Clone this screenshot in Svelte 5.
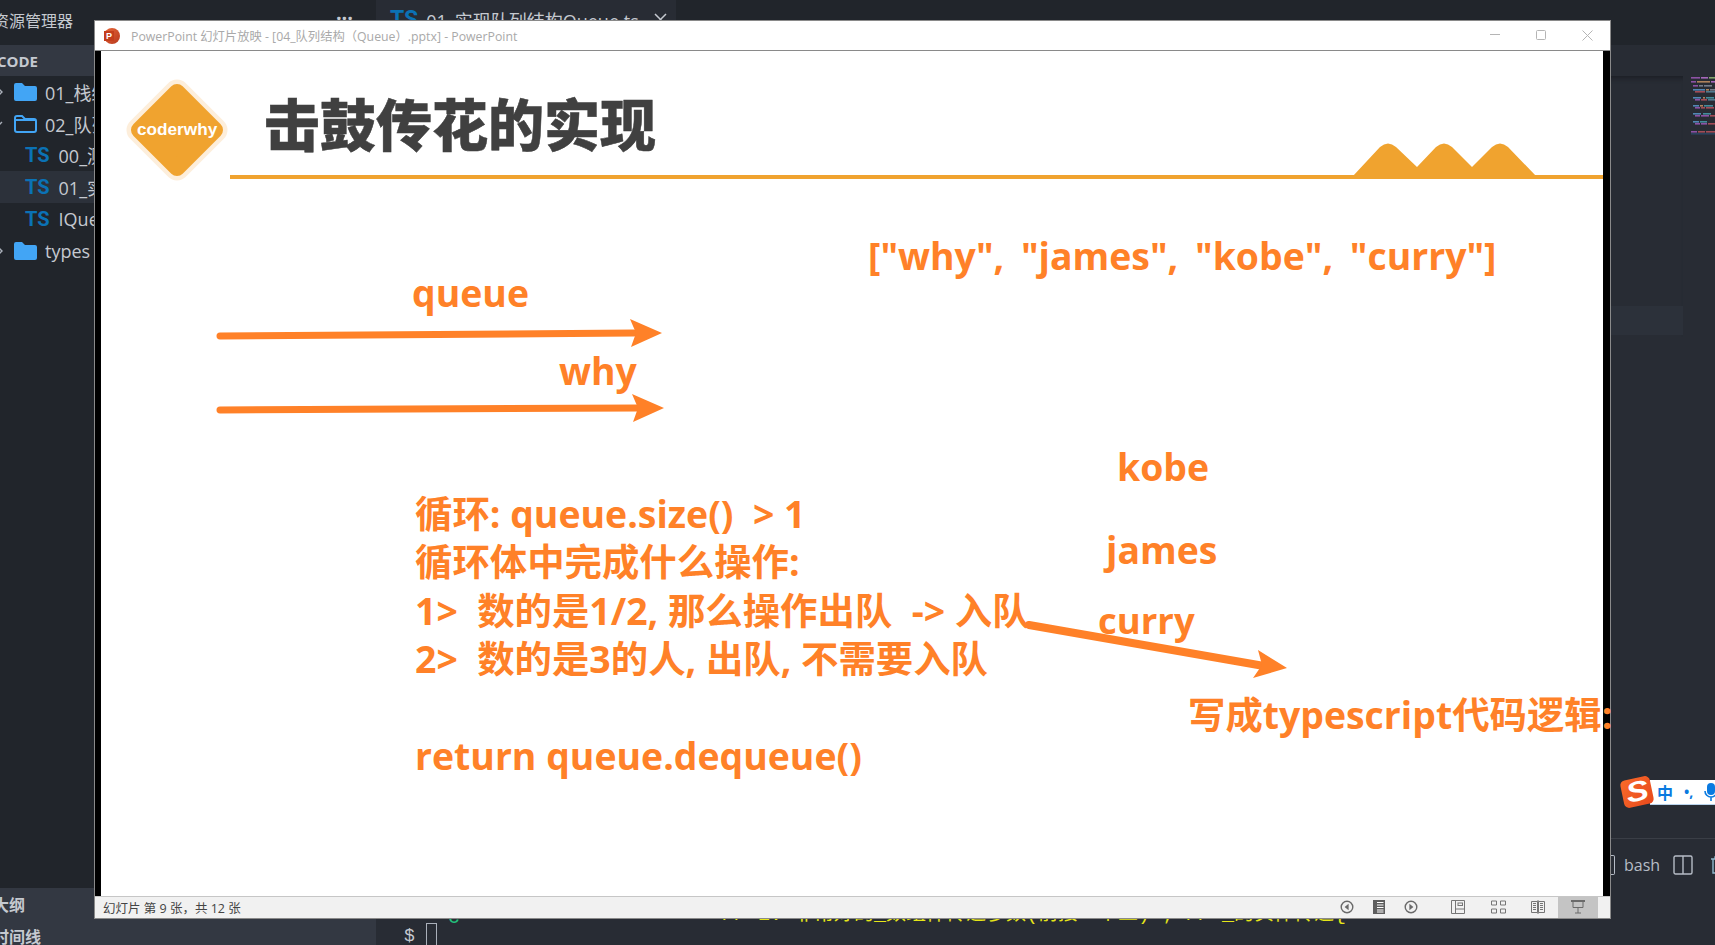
<script>
  const tree = [
    { kind: 'folder', label: '01_栈结构', chev: 'r' },
    { kind: 'open', label: '02_队列结构', chev: 'd' },
    { kind: 'ts', label: '00_测试.ts' },
    { kind: 'ts', label: '01_实现队列结构Queue.ts', active: true },
    { kind: 'ts', label: 'IQueue.ts' },
    { kind: 'folder', label: 'types', chev: 'r' }
  ];
  const mini = [
    [77, 1691, 9, '#a65cc0'], [77, 1701, 7, '#c678dd'], [77, 1709, 6, '#98c379'],
    [81, 1691, 5, '#a65cc0'], [81, 1697, 13, '#d19a66'], [81, 1711, 4, '#c678dd'],
    [85, 1693, 5, '#a65cc0'], [85, 1699, 4, '#8a92a0'], [85, 1704, 8, '#8a92a0'],
    [89, 1693, 12, '#5c9fd6'], [89, 1706, 3, '#d19a66'], [89, 1710, 5, '#8a92a0'],
    [91, 1695, 10, '#c25560'], [91, 1706, 9, '#5c8fa6'],
    [97, 1693, 8, '#5c9fd6'], [97, 1703, 2, '#d19a66'], [97, 1706, 8, '#4aa5b5'],
    [99, 1695, 5, '#a65cc0'], [99, 1701, 6, '#c25560'], [99, 1708, 7, '#5c8fa6'],
    [105, 1693, 6, '#5c9fd6'], [105, 1700, 3, '#d19a66'], [105, 1704, 9, '#4aa5b5'],
    [107, 1695, 5, '#a65cc0'], [107, 1701, 4, '#c25560'], [107, 1706, 8, '#c25560'],
    [113, 1693, 8, '#5c9fd6'], [113, 1703, 8, '#4aa5b5'],
    [115, 1695, 5, '#a65cc0'], [115, 1701, 8, '#a65cc0'], [115, 1710, 5, '#c25560'],
    [121, 1693, 6, '#5c9fd6'], [121, 1700, 7, '#4aa5b5'],
    [123, 1695, 5, '#a65cc0'], [123, 1701, 6, '#a65cc0'], [123, 1708, 7, '#c25560'],
    [131, 1691, 6, '#a65cc0'], [131, 1698, 7, '#c25560'], [131, 1706, 9, '#c25560'],
    [133, 1691, 24, '#2c4a68']
  ];
</script>

<div class="desk">
  <aside class="side">
    <div class="side-title"><span>资源管理器</span><span class="dots">···</span></div>
    <div class="side-head">CODE</div>
    <ul class="tree">
      {#each tree as row}
        <li class="row" class:active={row.active} class:leaf={row.kind === 'ts'}>
          {#if row.chev === 'r'}
            <svg class="chev" width="8" height="10" viewBox="0 0 8 10"><path d="M1 1l4 4-4 4" fill="none" stroke="#aab0ba" stroke-width="1.4"/></svg>
          {:else if row.chev === 'd'}
            <svg class="chev" width="8" height="10" viewBox="0 0 8 10"><path d="M-3 3l4 4 4-4" fill="none" stroke="#aab0ba" stroke-width="1.4"/></svg>
          {/if}
          {#if row.kind === 'ts'}
            <span class="ts">TS</span>
          {:else if row.kind === 'folder'}
            <svg class="folder" width="23" height="18" viewBox="0 0 23 18"><path d="M2 0h6l3 3h10a2 2 0 0 1 2 2v11a2 2 0 0 1-2 2H2a2 2 0 0 1-2-2V2a2 2 0 0 1 2-2z" fill="#42a5f5"/></svg>
          {:else}
            <svg class="folder" width="23" height="18" viewBox="0 0 23 18"><path d="M3 1h5l3 3h9a2 2 0 0 1 2 2v9a2 2 0 0 1-2 2H3a2 2 0 0 1-2-2V3a2 2 0 0 1 2-2z" fill="none" stroke="#42a5f5" stroke-width="2"/><path d="M1 5h21" stroke="#42a5f5" stroke-width="2"/></svg>
          {/if}
          <span class="label">{row.label}</span>
        </li>
      {/each}
    </ul>
    <div class="side-foot">
      <div class="foot-row">大纲</div>
      <div class="foot-row">时间线</div>
    </div>
  </aside>

  <main class="main">
    <div class="tabs">
      <div class="tab"><span class="ts">TS</span><span class="tab-name">01_实现队列结构Queue.ts</span><svg width="13" height="13" viewBox="0 0 13 13"><path d="M1 1l11 11M12 1L1 12" stroke="#c5c9d0" stroke-width="1.5"/></svg></div>
    </div>
    <div class="editor">
      <div class="crumbs"></div>
      <div class="code-col">
        <div class="current"></div>
      </div>
      <svg class="minimap" width="32" height="70" viewBox="1683 70 32 70">
        {#each mini as m}<rect x={m[1]} y={m[0]} width={m[2]} height="1.6" fill={m[3]} opacity=".8"/>{/each}
      </svg>
    </div>
    <div class="panel">
      <div class="panel-bar">
        <span class="bracket"></span>
        <span class="bash">bash</span>
        <svg class="split" width="20" height="20" viewBox="0 0 20 20"><rect x="1" y="1" width="18" height="18" rx="1.5" fill="none" stroke="#b6bcc6" stroke-width="1.4"/><path d="M10 1v18" stroke="#b6bcc6" stroke-width="1.4"/></svg>
        <svg class="trash" width="14" height="18" viewBox="0 0 14 18"><path d="M0 3h14M4 3V1h6v2M2 3v14h10V3" fill="none" stroke="#8fb7cc" stroke-width="1.4"/></svg>
      </div>
      <div class="term">
        <div class="term-green">c</div>
        <div class="term-yellow">// 1. 非常好的_数组件传递参数(前接一个二) ; // _的实体传递{'{'}</div>
        <div class="prompt"><span>$</span><span class="cursor"></span></div>
      </div>
    </div>
  </main>

  <section class="window">
    <header class="titlebar">
      <span class="ppt"><span class="ppt-p">P</span></span>
      <span class="win-title">PowerPoint 幻灯片放映 - [04_队列结构（Queue）.pptx] - PowerPoint</span>
      <div class="controls">
        <svg width="10" height="10" viewBox="0 0 10 10"><path d="M0 4.500h10" stroke="#b5b5b5" stroke-width="1"/></svg>
        <svg width="10" height="10" viewBox="0 0 10 10"><rect x=".5" y=".5" width="9" height="9" rx="1" fill="none" stroke="#b5b5b5"/></svg>
        <svg width="11" height="11" viewBox="0 0 11 11"><path d="M.5.5l10 10M10.500.5l-10 10" stroke="#b5b5b5"/></svg>
      </div>
    </header>

    <div class="stage">
      <div class="slide">
        <svg class="art" width="1502" height="845" viewBox="101 51 1502 845">
          <polygon points="177,92 215,130 177,168 139,130" fill="#fdeedb" stroke="#fdeedb" stroke-width="25" stroke-linejoin="round"/>
          <polygon points="177,92 215,130 177,168 139,130" fill="#f0a32f" stroke="#f0a32f" stroke-width="16" stroke-linejoin="round"/>
          <rect x="230" y="175" width="1373" height="4" fill="#f0a32f"/>
          <path d="M1353 176L1380 147Q1388 140 1396 147L1417 167L1436 147Q1444 140 1452 147L1472 167L1492 147Q1500 140 1508 147L1536 176V179H1353Z" fill="#f0a32f"/>

          <path d="M220 336L634 333" stroke="#ff8128" stroke-width="7" stroke-linecap="round"/>
          <polygon points="662,333 630,319 636,333 631,347" fill="#ff8128"/>
          <path d="M220 410L638 408" stroke="#ff8128" stroke-width="7" stroke-linecap="round"/>
          <polygon points="664,408 632,394 638,408 633,422" fill="#ff8128"/>
          <path d="M1029 625L1264 666" stroke="#ff8128" stroke-width="8" stroke-linecap="round"/>
          <polygon points="1287,668 1258,650 1262,665 1253,678" fill="#ff8128"/>
        </svg>

        <div class="logo-text">coderwhy</div>
        <h1 class="heading">击鼓传花的实现</h1>

        <div class="t t-list">["why", "james", "kobe", "curry"]</div>
        <div class="t t-queue">queue</div>
        <div class="t t-why">why</div>
        <div class="t t-kobe">kobe</div>
        <div class="t t-james">james</div>
        <div class="t t-curry">curry</div>
        <div class="t t-code">写成typescript代码逻辑:</div>
        <div class="t t-body">
          <div>循环: queue.size()&nbsp; &gt; 1</div>
          <div>循环体中完成什么操作:</div>
          <div>1&gt;&nbsp; 数的是1/2, 那么操作出队&nbsp; -&gt;&nbsp;入队</div>
          <div>2&gt;&nbsp; 数的是3的人, 出队, 不需要入队</div>
          <div>&nbsp;</div>
          <div>return queue.dequeue()</div>
        </div>
      </div>
    </div>

    <footer class="status">
      <span class="status-text">幻灯片 第 9 张，共 12 张</span>
      <div class="status-icons">
        <svg class="ic-prev" width="14" height="14" viewBox="0 0 14 14"><circle cx="7" cy="7" r="5.8" fill="none" stroke="#6a6a6a" stroke-width="1.4"/><path d="M8.6 3.8v6.4L4.6 7z" fill="#6a6a6a"/></svg>
        <svg class="ic-notes" width="12" height="14" viewBox="0 0 12 14"><rect width="12" height="14" fill="#5e5e5e"/><path d="M4 2.500h6.500M4 5h6.500M4 7.500h6.500M4 10h6.500M4 12h6.500" stroke="#fff" stroke-width="1"/></svg>
        <svg class="ic-next" width="14" height="14" viewBox="0 0 14 14"><circle cx="7" cy="7" r="5.8" fill="none" stroke="#6a6a6a" stroke-width="1.4"/><path d="M5.4 3.8v6.4L9.4 7z" fill="#6a6a6a"/></svg>
        <svg class="ic-normal" width="14" height="14" viewBox="0 0 14 14"><path d="M.5.5h13v13H.5zM4.500.5v13M4.500 9h9" fill="none" stroke="#767676"/><rect x="7" y="3" width="4.500" height="2.500" fill="none" stroke="#767676"/></svg>
        <svg class="ic-grid" width="15" height="14" viewBox="0 0 15 14"><path d="M.5 1h5v4h-5zM9.500 1h5v4h-5zM.5 9h5v4h-5zM9.500 9h5v4h-5z" fill="none" stroke="#767676"/></svg>
        <svg class="ic-read" width="14" height="14" viewBox="0 0 14 14"><path d="M.5 1.500h6v11h-6zM7.500 1.500h6v11h-6zM2 3.500h3M2 5.500h3M2 7.500h3M2 9.500h3M9 3.500h3M9 5.500h3M9 7.500h3M9 9.500h3M7 0v14" fill="none" stroke="#767676"/></svg>
        <div class="ic-show">
          <svg width="14" height="14" viewBox="0 0 14 14"><path d="M0 1h14" stroke="#6a6a6a" stroke-width="2"/><path d="M2 2v5.500h10V2M7 7.500V13M4 13h6" fill="none" stroke="#6a6a6a"/></svg>
        </div>
      </div>
    </footer>
  </section>

  <div class="ime">
    <span class="sogou"><span class="sogou-s">S</span></span>
    <div class="ime-bar">
      <span class="ime-zh">中</span>
      <span class="ime-p">•,</span>
      <svg width="14" height="18" viewBox="0 0 14 18"><rect x="3" y="0" width="8" height="12" rx="4" fill="#0a7ae0"/><path d="M1 8a6 6 0 0 0 12 0M7 14v4" fill="none" stroke="#0a7ae0" stroke-width="1.6"/></svg>
    </div>
  </div>
</div>

<style>
  :global(body) { margin: 0; background: #282c34; overflow: hidden; }
  .desk {
    position: relative; width: 1715px; height: 945px; overflow: hidden;
    display: grid; grid-template-columns: 376px 1fr;
    font-family: "Open Sans", "Noto Sans CJK SC", sans-serif; color: #c5c9d0;
  }
  .side { background: #21252b; display: flex; flex-direction: column; min-height: 0; }
  .side-title { height: 45px; display: flex; align-items: center; justify-content: space-between; padding: 0 23px 6px 0; box-sizing: border-box; font-size: 16px; }
  .side-title span:first-child { margin-left: -7px; }
  .dots { font-size: 20px; font-weight: 700; line-height: 1; padding-bottom: 4px; }
  .side-head { height: 31px; background: #333842; display: flex; align-items: center; font-size: 15px; font-weight: 700; text-indent: -3px; overflow: hidden; }
  .tree { list-style: none; margin: 0; padding: 0; flex: 1; font-size: 18px; }
  .row { height: 31.8px; display: flex; align-items: center; padding-left: 14px; position: relative; box-sizing: border-box; }
  .row.leaf { padding-left: 25px; }
  .row.active { background: #2c313a; }
  .chev { position: absolute; left: -3px; top: 11px; }
  .folder { margin-right: 8px; flex: none; }
  .ts { color: #0b72b5; font-weight: 700; font-size: 20px; font-family: "Roboto", sans-serif; margin-right: 9px; }
  .label { white-space: nowrap; }
  .side-foot { height: 57px; background: #333842; font-weight: 700; font-size: 16px; }
  .foot-row { height: 32px; line-height: 32px; margin-left: -7px; }
  .foot-row:first-child { padding-top: 1px; }

  .main { display: flex; flex-direction: column; min-width: 0; background: #282c34; }
  .tabs { height: 45px; background: #21252b; flex: none; }
  .tab { width: 300px; height: 45px; background: #282c34; display: flex; align-items: center; padding: 0 0 6px 14px; box-sizing: border-box; font-size: 18px; }
  .tab .ts { font-size: 23px; margin-right: 8px; }
  .tab-name { margin-right: 15px; white-space: nowrap; }
  .editor { flex: 1; position: relative; min-height: 0; }
  .crumbs { height: 31px; }
  .code-col { width: 1307px; height: 261px; box-shadow: inset 0 6px 5px -4px #1b1e24; position: relative; }
  .current { position: absolute; top: 230px; left: 0; right: 0; height: 29px; background: #2c313a; }
  .minimap { position: absolute; right: 0; top: 25px; }
  .panel { height: 107px; flex: none; border-top: 1px solid #3a3e46; box-sizing: border-box; position: relative; }
  .panel-bar { position: absolute; left: 1234px; top: 16px; display: flex; align-items: center; height: 20px; }
  .bracket { width: 4px; height: 18px; border: 1.5px solid #b6bcc6; border-left: 0; border-radius: 0 2px 2px 0; margin-right: 9px; }
  .bash { font-size: 16px; color: #b6bcc6; margin-right: 13px; }
  .split { margin-right: 18px; flex: none; }
  .trash { flex: none; }
  .term { position: absolute; left: 0; top: 0; right: 0; bottom: 0; }
  .term-green { position: absolute; left: 72px; top: 67px; font-size: 20px; color: #23c17c; font-family: "Liberation Mono", monospace; }
  .term-yellow { position: absolute; left: 346px; top: 62px; font-size: 20px; line-height: 27px; color: #e6e619; white-space: nowrap; font-family: "Liberation Mono", "Noto Sans CJK SC", monospace; }
  .prompt { position: absolute; left: 28px; top: 85px; display: flex; align-items: flex-start; font-size: 18px; color: #c5c9d0; font-family: "Liberation Mono", monospace; line-height: 24px; }
  .cursor { width: 9px; height: 26px; border: 1px solid #aab0ba; margin-left: 11px; display: block; margin-top: -1px; }

  .window {
    position: absolute; left: 94px; top: 20px; width: 1517px; height: 899px; box-sizing: border-box;
    border: 1px solid #8a8a8a; background: #fff; display: flex; flex-direction: column;
  }
  .titlebar { height: 30px; box-sizing: border-box; flex: none; display: flex; align-items: center; border-bottom: 1px solid #8a8a8a; position: relative; padding-left: 9px; }
  .ppt { width: 16px; height: 16px; border-radius: 50%; background: linear-gradient(135deg, #e8683a, #b8391d); display: flex; align-items: center; position: relative; }
  .ppt-p { width: 10px; height: 10px; background: #c43e1c; color: #fff; font: 700 9px/10px "Liberation Sans", sans-serif; text-align: center; }
  .win-title { margin-left: 11px; font-size: 12.3px; color: #a9a9a9; white-space: nowrap; }
  .controls { position: absolute; left: 1395px; top: 9px; display: flex; gap: 36px; align-items: flex-start; }
  .stage { flex: 1; min-height: 0; background: #000; padding: 0 7px 0 6px; display: flex; }
  .slide { flex: 1; position: relative; background: #fff; }
  .art { position: absolute; left: 0; top: 0; }
  .logo-text { position: absolute; left: 36px; top: 67px; width: 80px; text-align: center; font: 700 17.2px/22px "Liberation Sans", sans-serif; color: #fff; white-space: nowrap; }
  .heading { position: absolute; left: 163px; top: 29px; margin: 0; font: 900 56px/84px "Noto Sans CJK SC", sans-serif; color: #404040; white-space: nowrap; -webkit-text-stroke: .5px #404040; }
  .t { position: absolute; color: #ff8128; font-family: "Open Sans", "Noto Sans CJK SC", sans-serif; font-weight: 700; font-size: 37.4px; line-height: 48.4px; white-space: nowrap; }
  .t-list { left: 767px; top: 181px; word-spacing: 7px; }
  .t-queue { left: 311px; top: 218px; }
  .t-why { left: 458px; top: 296px; }
  .t-kobe { left: 1016px; top: 392px; }
  .t-james { left: 1005px; top: 475px; }
  .t-curry { left: 997px; top: 545px; font-size: 36.5px; }
  .t-code { left: 1087px; top: 640px; }
  .t-body { left: 314px; top: 439px; }

  .status { height: 22px; flex: none; background: #f1f1f1; border-top: 1px solid #c6c6c6; box-sizing: border-box; display: flex; align-items: center; position: relative; }
  .status-text { margin-left: 8px; font-size: 12.5px; color: #444; white-space: nowrap; }
  .status-icons { position: absolute; left: 0; top: 0; height: 21px; width: 100%; }
  .status-icons svg { position: absolute; top: 3px; }
  .ic-prev { left: 1245px; }
  .ic-notes { left: 1278px; }
  .ic-next { left: 1309px; }
  .ic-normal { left: 1356px; }
  .ic-grid { left: 1396px; }
  .ic-read { left: 1436px; }
  .ic-show { position: absolute; left: 1463px; top: 0; width: 40px; height: 21px; background: #c4c4c4; }
  .ic-show svg { left: 13px; }

  .ime { position: absolute; left: 1622px; top: 778px; display: flex; align-items: center; }
  .sogou { width: 30px; height: 28px; border-radius: 5px; background: linear-gradient(135deg, #f86a2a, #e8491c); transform: rotate(-12deg); display: flex; align-items: center; justify-content: center; position: relative; z-index: 1; flex: none; }
  .sogou-s { color: #fff; font: italic 900 28px/28px "Liberation Sans", sans-serif; transform: scaleX(1.2); }
  .ime-bar { width: 66px; height: 25px; margin-left: -2px; background: #fff; border-bottom: 1px solid #b9d3ec; display: flex; align-items: center; padding-left: 7px; box-sizing: border-box; gap: 11px; color: #0a7ae0; flex: none; }
  .ime-zh { font-size: 16px; font-weight: 700; }
  .ime-p { font-size: 14px; font-weight: 700; }
  .ime-bar svg { flex: none; }
</style>
